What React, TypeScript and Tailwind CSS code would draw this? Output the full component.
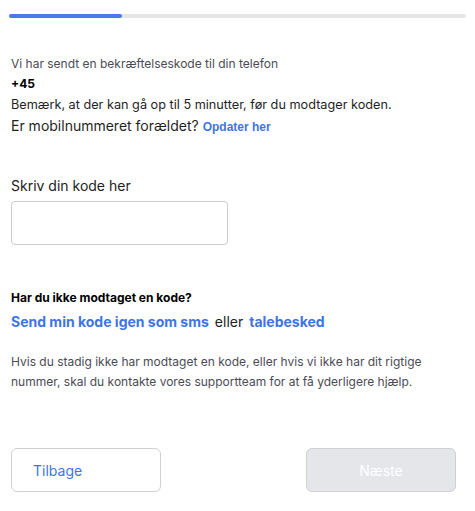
const blue = "text-[#3f74e6]";

export default function App() {
  return (
    <div className="w-[475px] h-[511px] bg-white font-['Inter',sans-serif] text-[#1f1f1f]">
      <div className="px-[9px] pt-[14px]">
        <div className="h-[4px] w-full rounded-full bg-[#e6e6e6]">
          <div className="h-full w-[113px] rounded-full bg-[#4a7be8]" />
        </div>
      </div>

      <div className="px-[11px] pt-[36px]">
        <p className="text-[12px] leading-[20px] text-[#4b4b55]">
          Vi har sendt en bekræftelseskode til din telefon
        </p>
        <p className="text-[12px] leading-[20px] font-bold text-black">+45</p>
        <p className="text-[12.7px] leading-[21px]">
          Bemærk, at der kan gå op til 5 minutter, før du modtager koden.
        </p>
        <p className="text-[14px] leading-[21px]">
          Er mobilnummeret forældet?{" "}
          <a className={`${blue} text-[12px] font-bold font-['Liberation_Sans',sans-serif]`}>
            Opdater her
          </a>
        </p>
      </div>

      <div className="px-[11px] pt-[38px]">
        <label className="block text-[14px] leading-[20px] text-[#222]">Skriv din kode her</label>
        <input
          className="mt-[5px] block h-[44px] w-[217px] rounded-[4px] border border-[#cccccc] bg-white"
          type="text"
        />
      </div>

      <div className="px-[11px] pt-[43px]">
        <p className="text-[12px] leading-[20px] font-bold text-black">Har du ikke modtaget en kode?</p>
        <p className="mt-[4px] flex items-center gap-[6px] text-[14px] leading-[20px]">
          <a className={`${blue} font-bold`}>Send min kode igen som sms</a>
          <span className="text-[#222]">eller</span>
          <a className={`${blue} font-bold`}>talebesked</a>
        </p>
        <p className="mt-[20px] text-[12px] leading-[20px] text-[#4b4b55]">
          Hvis du stadig ikke har modtaget en kode, eller hvis vi ikke har dit rigtige nummer, skal du kontakte vores supportteam for at få yderligere hjælp.
        </p>
      </div>

      <div className="flex justify-between px-[11px] pt-[56px] pr-[19px]">
        <button className={`h-[44px] w-[150px] rounded-[6px] border border-[#d0d0d0] bg-white pl-[21px] text-left text-[14px] ${blue}`}>
          Tilbage
        </button>
        <button className="h-[44px] w-[150px] rounded-[6px] border border-[#d0d0d0] bg-[#e5e6ea] text-[14px] text-white">
          Næste
        </button>
      </div>
    </div>
  );
}
